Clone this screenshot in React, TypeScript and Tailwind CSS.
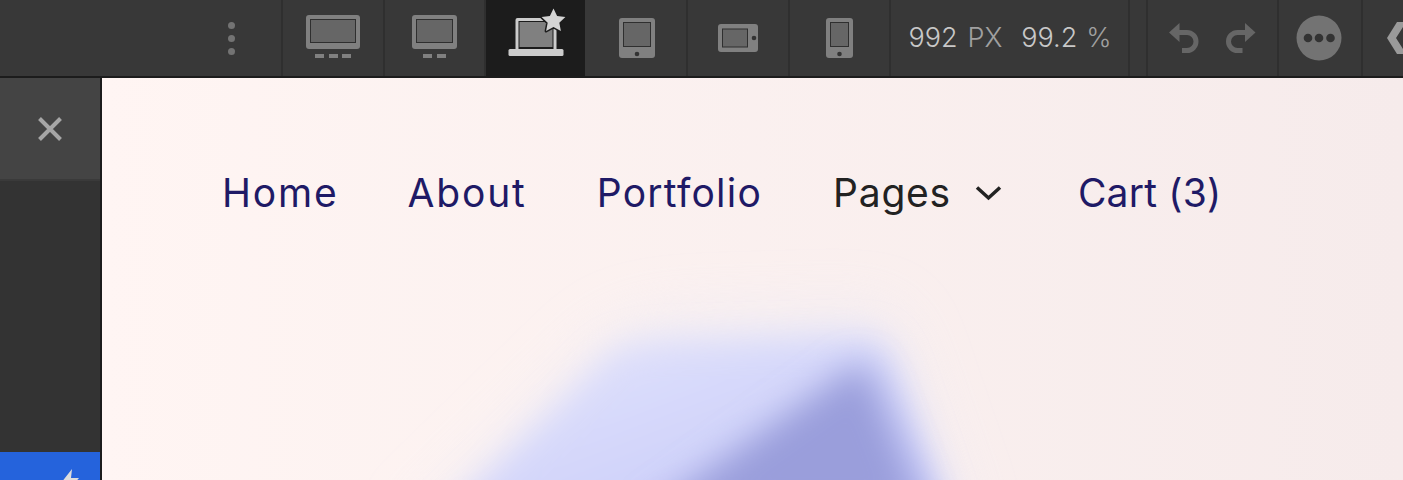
import type { ReactNode } from 'react'

const uiFont = "font-['Inter','Liberation_Sans',sans-serif]"

function Segment({ width, active, children }: { width: string; active?: boolean; children: ReactNode }) {
  return (
    <div
      className={`flex h-full shrink-0 items-center justify-center border-r-2 ${width} ${
        active ? 'border-[#1c1c1c] bg-[#1c1c1c]' : 'border-[#2f2f2f]'
      }`}
    >
      {children}
    </div>
  )
}

function LargeDesktopIcon() {
  return (
    <svg width="54" height="44" viewBox="0 0 54 44" className="-mt-[4px]">
      <rect x="0" y="1" width="54" height="34" rx="3" fill="#808080" />
      <rect x="4" y="5" width="46" height="24" fill="#2f2f2f" />
      <rect x="5" y="6" width="44" height="22" fill="#666666" />
      <rect x="9" y="40" width="9" height="4" fill="#808080" />
      <rect x="23" y="40" width="9" height="4" fill="#808080" />
      <rect x="36" y="40" width="9" height="4" fill="#808080" />
    </svg>
  )
}

function DesktopIcon() {
  return (
    <svg width="45" height="44" viewBox="0 0 45 44" className="-mt-[4px]">
      <rect x="0" y="1" width="45" height="34" rx="3" fill="#808080" />
      <rect x="4" y="5" width="37" height="24" fill="#2f2f2f" />
      <rect x="5" y="6" width="35" height="22" fill="#666666" />
      <rect x="11" y="40" width="9" height="4" fill="#808080" />
      <rect x="25" y="40" width="9" height="4" fill="#808080" />
    </svg>
  )
}

function LaptopStarIcon() {
  return (
    <svg width="60" height="52" viewBox="0 0 60 52" className="overflow-visible">
      <g transform="translate(3.5 -4)">
        <rect x="7" y="10" width="41" height="33" rx="2" fill="#cccccc" />
        <rect x="10" y="13" width="35" height="29" fill="#1c1c1c" />
        <rect x="11" y="14" width="33" height="25" fill="#808080" />
        <rect x="0" y="41" width="55" height="7" rx="1.500" fill="#cccccc" />
        <path
          d="M45 0.500l3.600 7.600 8.300 1-6.100 5.700 1.600 8.200-7.400-4.100-7.400 4.100 1.600-8.200-6.100-5.700 8.300-1z"
          fill="#d4d4d4"
          stroke="#1c1c1c"
          strokeWidth="3"
          strokeLinejoin="round"
          paintOrder="stroke"
        />
      </g>
    </svg>
  )
}

function TabletIcon() {
  return (
    <svg width="36" height="40" viewBox="0 0 36 40" className="ml-[3px]">
      <rect width="36" height="40" rx="3" fill="#808080" />
      <rect x="4" y="4" width="28" height="25" fill="#2f2f2f" />
      <rect x="5" y="5" width="26" height="23" fill="#666666" />
      <circle cx="18" cy="36" r="2.300" fill="#333333" />
    </svg>
  )
}

function TabletLandscapeIcon() {
  return (
    <svg width="40" height="28" viewBox="0 0 40 28">
      <rect width="40" height="28" rx="3" fill="#808080" />
      <rect x="4" y="4.500" width="26" height="19" fill="#2f2f2f" />
      <rect x="5" y="5.500" width="24" height="17" fill="#666666" />
      <circle cx="36" cy="14" r="2.300" fill="#333333" />
    </svg>
  )
}

function PhoneIcon() {
  return (
    <svg width="27" height="40" viewBox="0 0 27 40">
      <rect width="27" height="40" rx="3" fill="#808080" />
      <rect x="4" y="4" width="19" height="25" fill="#2f2f2f" />
      <rect x="5" y="5" width="17" height="23" fill="#666666" />
      <circle cx="13.500" cy="36" r="2.300" fill="#333333" />
    </svg>
  )
}

function UndoRedo() {
  return (
    <div className="flex items-center gap-[27px]">
      <svg width="30" height="30" viewBox="0 0 30 30">
        <path d="M0 9.500 10.500 0v19z" fill="#666666" />
        <path d="M9 9.500h9a9 9 0 0 1 0 18h-5" fill="none" stroke="#666666" strokeWidth="5" />
      </svg>
      <svg width="30" height="30" viewBox="0 0 30 30">
        <path d="M29.500 9.500 19 0v19z" fill="#666666" />
        <path d="M20.500 9.500h-9a9 9 0 0 0 0 18h5" fill="none" stroke="#666666" strokeWidth="5" />
      </svg>
    </div>
  )
}

function MoreIcon() {
  return (
    <svg width="46" height="46" viewBox="0 0 46 46" className="-ml-[2px]">
      <circle cx="23" cy="23" r="22.500" fill="#737373" />
      <circle cx="12" cy="23" r="4.300" fill="#333333" />
      <circle cx="23" cy="23" r="4.300" fill="#333333" />
      <circle cx="34.500" cy="23" r="4.300" fill="#333333" />
    </svg>
  )
}

function Toolbar() {
  return (
    <header className="flex h-[78px] shrink-0 border-b-2 border-[#1c1c1c] bg-[#383838]">
      <div className="flex h-full w-[283px] shrink-0 items-center justify-end border-r-2 border-[#2f2f2f] pr-[46px]">
        <div className="flex flex-col gap-[6px]">
          <span className="size-[7px] rounded-full bg-[#737373]" />
          <span className="size-[7px] rounded-full bg-[#737373]" />
          <span className="size-[7px] rounded-full bg-[#737373]" />
        </div>
      </div>
      <Segment width="w-[102px]"><LargeDesktopIcon /></Segment>
      <Segment width="w-[101px]"><DesktopIcon /></Segment>
      <Segment width="w-[99px]" active><LaptopStarIcon /></Segment>
      <Segment width="w-[103px]"><TabletIcon /></Segment>
      <Segment width="w-[102px]"><TabletLandscapeIcon /></Segment>
      <Segment width="w-[101px]"><PhoneIcon /></Segment>
      <Segment width="w-[239px]">
        <div className={`ml-[1px] flex items-baseline text-[27px] font-light text-[#c8c8c8] ${uiFont}`}>
          <span>992</span>
          <span className="ml-[10px] text-[#a0a0a0]">PX</span>
          <span className="ml-[19px]">99.2</span>
          <span className="ml-[9px] text-[#a0a0a0]">%</span>
        </div>
      </Segment>
      <Segment width="w-[18px]">{null}</Segment>
      <Segment width="w-[131px]"><UndoRedo /></Segment>
      <Segment width="w-[84px]"><MoreIcon /></Segment>
      <div className="flex flex-1 items-center justify-end overflow-hidden">
        <svg width="16" height="32" viewBox="0 0 16 32" className="shrink-0">
          <path d="M0 16 10 0h6v5L9 16l7 11v5h-6z" fill="#9a9a9a" />
        </svg>
      </div>
    </header>
  )
}

function Sidebar() {
  return (
    <aside className="flex w-[102px] shrink-0 flex-col justify-between border-r-2 border-[#1c1c1c] bg-[#333333]">
      <div className="flex h-[103px] items-center justify-center border-b-2 border-[#3a3a3a] bg-[#444444]">
        <svg width="26" height="26" viewBox="0 0 26 26">
          <path d="M2.500 2.500l21 21M23.500 2.500l-21 21" stroke="#a6a6a6" strokeWidth="4" />
        </svg>
      </div>
      <div className="flex h-[28px] items-start justify-end bg-[#2563dc] pr-[21px] pt-[17px]">
        <svg width="18" height="24" viewBox="0 0 18 24" className="shrink-0">
          <path d="M11 0 0 14h7l-2 10 13-15h-8z" fill="#dddddd" />
        </svg>
      </div>
    </aside>
  )
}

function Blob() {
  return (
    <svg
      className="absolute inset-0 h-full w-full"
      viewBox="0 0 1301 402"
      preserveAspectRatio="none"
      aria-hidden="true"
    >
      <defs>
        <linearGradient id="canvas" x1="0" y1="0" x2="1" y2="0">
          <stop offset="0" stopColor="#fff5f3" />
          <stop offset="1" stopColor="#f6ebeb" />
        </linearGradient>
        <linearGradient id="light" x1="0" y1="0" x2="1" y2="1">
          <stop offset="0" stopColor="#e6e7fc" />
          <stop offset="1" stopColor="#bfc3f8" />
        </linearGradient>
        <filter id="halo" x="-30%" y="-30%" width="160%" height="160%">
          <feGaussianBlur stdDeviation="30" />
        </filter>
        <filter id="soft" x="-30%" y="-30%" width="160%" height="160%">
          <feGaussianBlur stdDeviation="16" />
        </filter>
        <filter id="softer" x="-30%" y="-30%" width="160%" height="160%">
          <feGaussianBlur stdDeviation="17" />
        </filter>
      </defs>
      <rect width="1301" height="402" fill="url(#canvas)" />
      <path d="M500 265Q530 240 600 240L770 235Q795 240 805 285L865 460H300z" fill="#e9e9f8" opacity="0.6" filter="url(#halo)" />
      <path d="M510 275Q530 262 600 263L765 258Q785 262 795 290L855 460H320z" fill="url(#light)" filter="url(#soft)" />
      <path d="M750 290Q760 275 775 310L825 440H540z" fill="#9a9edb" filter="url(#softer)" />
    </svg>
  )
}

function Canvas() {
  return (
    <main className="relative flex-1 overflow-hidden">
      <Blob />
      <nav className="relative flex h-[230px] items-start gap-[70px] pl-[120px] pt-[89px] font-['Inter',sans-serif] text-[39px] leading-[52px] text-[#1f1a66]">
        <a className="-mr-[1px] tracking-[1.8px]">Home</a>
        <a className="tracking-[1.85px]">About</a>
        <a className="mr-[1px] tracking-[1.25px]">Portfolio</a>
        <div className="mr-[6px] flex items-center gap-[24px] text-[#222222]">
          <span className="tracking-[0.75px]">Pages</span>
          <svg width="27" height="16" viewBox="0 0 27 16">
            <path d="M2 2.500 13.500 13 25 2.500" fill="none" stroke="#222222" strokeWidth="3.500" />
          </svg>
        </div>
        <a className="tracking-[0.2px]">Cart (3)</a>
      </nav>
    </main>
  )
}

export default function App() {
  return (
    <div className="flex h-[480px] w-[1403px] flex-col overflow-hidden">
      <Toolbar />
      <div className="flex min-h-0 flex-1">
        <Sidebar />
        <Canvas />
      </div>
    </div>
  )
}
